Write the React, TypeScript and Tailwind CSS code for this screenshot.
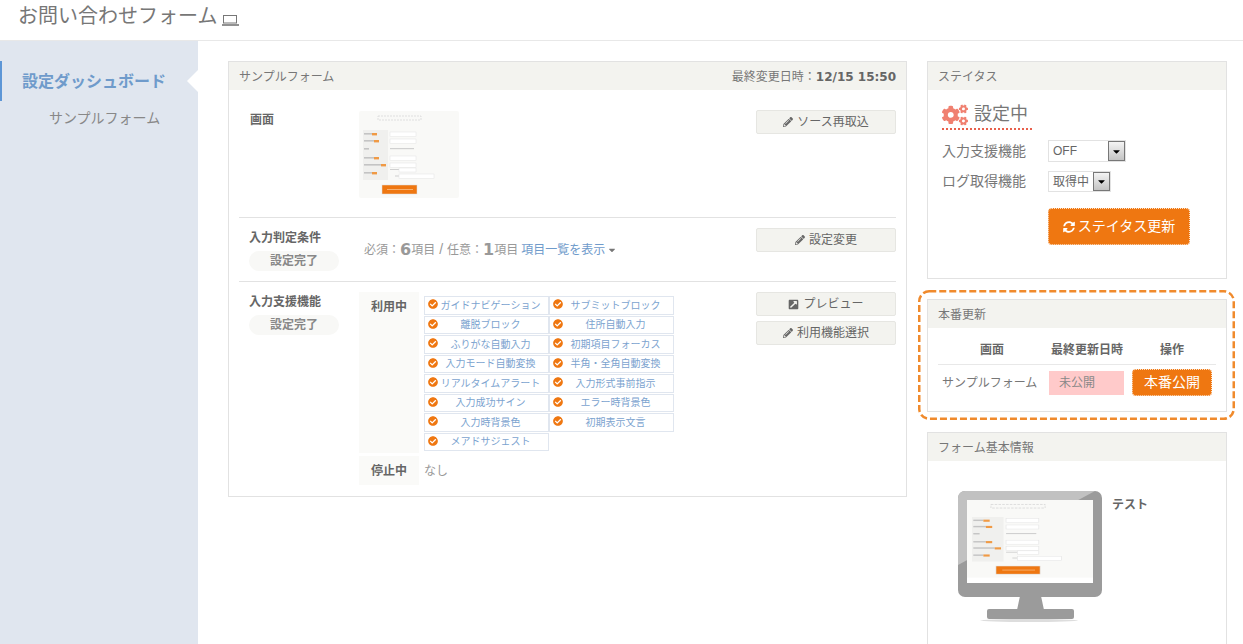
import { FaCaretDown, FaCheckCircle, FaCogs, FaExternalLinkSquareAlt, FaPencilAlt, FaSyncAlt } from "react-icons/fa"

const features = [
  "ガイドナビゲーション", "サブミットブロック",
  "離脱ブロック", "住所自動入力",
  "ふりがな自動入力", "初期項目フォーカス",
  "入力モード自動変換", "半角・全角自動変換",
  "リアルタイムアラート", "入力形式事前指示",
  "入力成功サイン", "エラー時背景色",
  "入力時背景色", "初期表示文言",
  "メアドサジェスト",
]

function FormThumbShapes() {
  return (
    <>
      <rect width="100" height="87" fill="#f9f9f7" />
      <rect x="19" y="5" width="43" height="4" fill="none" stroke="#d4d4d4" strokeWidth="0.7" strokeDasharray="2 1" />
      <rect x="4" y="19" width="25" height="50" fill="#f0f0ee" />
      {[21, 28, 45, 52].map((y, i) => (
        <g key={y}>
          <rect x="5" y={y + 1} width={[8, 10, 10, 17][i]} height="1.6" fill="#c4c4c4" />
          <rect x={[13, 15, 15, 22][i]} y={y + 1} width="5" height="2.4" fill="#f09a45" />
          <rect x="31" y={y} width="26" height="4.5" fill="#fff" stroke="#e3e3e3" strokeWidth="0.5" />
        </g>
      ))}
      <rect x="5" y="37" width="5" height="1.6" fill="#c4c4c4" />
      <rect x="31" y="37" width="24" height="1.2" fill="#d0d0d0" />
      <rect x="5" y="61" width="8" height="1.6" fill="#c4c4c4" />
      <rect x="13" y="61" width="5" height="2.4" fill="#f09a45" />
      <rect x="31" y="58" width="9" height="1" fill="#d0d0d0" />
      <rect x="40" y="57" width="17" height="4" fill="#fff" stroke="#e3e3e3" strokeWidth="0.5" />
      <rect x="36" y="64.5" width="4" height="1" fill="#d0d0d0" />
      <rect x="40" y="63" width="35" height="4.5" fill="#fff" stroke="#e3e3e3" strokeWidth="0.5" />
      <rect x="23" y="74" width="35" height="9" fill="#ef7711" stroke="#ddd" strokeWidth="0.5" />
      <rect x="28" y="78" width="26" height="1" fill="#f7b070" />
    </>
  )
}

function Monitor() {
  return (
    <svg width="144" height="131" viewBox="0 0 144 131">
      <ellipse cx="71" cy="129.5" rx="49" ry="1.5" fill="#ddd" />
      <path d="M62 105H83L86 119H59Z" fill="#9b9b9b" />
      <rect x="29" y="118" width="87" height="10" rx="2" fill="#9b9b9b" />
      <rect width="144" height="106" rx="7" fill="#9b9b9b" />
      <path d="M0 74V7A7 7 0 0 1 7 0H137Z" fill="#c1c1c1" />
      <rect x="9" y="9" width="126" height="83" fill="#fff" />
      <svg x="9" y="9" width="126" height="83" viewBox="0 0 100 93" preserveAspectRatio="none">
        <FormThumbShapes />
      </svg>
    </svg>
  )
}

function Panel({ title, right, className, children }: { title: string; right?: React.ReactNode; className?: string; children: React.ReactNode }) {
  return (
    <section className={`border border-[#e2e2e2] bg-white ${className ?? ""}`}>
      <div className="flex h-[28px] items-center justify-between bg-[#f3f3ef] px-[10px] pt-[2px] text-[12px] text-[#777]">
        <span>{title}</span>
        {right}
      </div>
      {children}
    </section>
  )
}

function GrayButton({ icon, label }: { icon: React.ReactNode; label: string }) {
  return (
    <button className="flex h-[24px] w-[140px] items-center justify-center gap-[4px] rounded-[2px] border border-[#e6e6e2] bg-[#f3f3ef] text-[12px] text-[#666]">
      {icon}
      {label}
    </button>
  )
}

function Pill() {
  return (
    <div className="mt-[4px] flex h-[20px] w-[90px] items-center justify-center rounded-full bg-[#f8f8f6] text-[12px] font-bold text-[#888]">
      設定完了
    </div>
  )
}

function FakeSelect({ value, width }: { value: string; width: string }) {
  return (
    <div className={`flex items-stretch border border-[#e2e2e2] bg-white text-[12px] text-[#666] ${width}`}>
      <span className="flex flex-1 items-center pl-[4px]">{value}</span>
      <span className="flex w-[17px] items-center justify-center border border-[#777] bg-gradient-to-b from-[#f4f4f4] to-[#c4c4c4] text-black">
        <FaCaretDown size={11} />
      </span>
    </div>
  )
}

function OrangeButton({ className, children }: { className?: string; children: React.ReactNode }) {
  return (
    <button className={`flex items-center justify-center rounded-[4px] border border-dotted border-[#fde3cc] bg-[#ef7711] text-[14px] text-white ${className ?? ""}`}>
      {children}
    </button>
  )
}

export default function App() {
  return (
    <div className="h-[644px] overflow-hidden bg-white font-['Liberation_Sans','Noto_Sans_CJK_JP',sans-serif] text-[#777]">
      <header className="flex h-[41px] items-start border-b border-[#e8e8e8] pl-[18px] pt-[2px]">
        <h1 className="text-[20px] leading-[28px] text-[#777]">お問い合わせフォーム</h1>
        <svg className="ml-[5px] mt-[12px]" width="17" height="12" viewBox="0 0 17 12" fill="none" stroke="#777">
          <rect x="1.5" y="1.5" width="13" height="7.5" strokeWidth="1" />
          <path d="M0 11H17" strokeWidth="1.6" />
        </svg>
      </header>

      <div className="flex h-[603px]">
        <aside className="relative w-[198px] shrink-0 bg-[#e0e6ef] pt-[20px]">
          <div className="flex h-[40px] items-center border-l-2 border-[#5d96d6] pl-[20px] pt-[2px] text-[16px] font-bold text-[#6f9bcb]">
            設定ダッシュボード
          </div>
          <div className="absolute left-[187px] top-[29px] h-0 w-0 border-y-[11px] border-r-[11px] border-y-transparent border-r-white" />
          <div className="pl-[49px] pt-[7px] text-[14px] leading-[20px] text-[#888]">サンプルフォーム</div>
        </aside>

        <main className="flex flex-1 items-start pl-[30px] pt-[20px]">
          <Panel
            title="サンプルフォーム"
            className="h-[436px] w-[679px] shrink-0"
            right={
              <span>
                最終変更日時：<b className="font-['DejaVu_Sans',sans-serif] text-[#666]">12/15 15:50</b>
              </span>
            }
          >
            <div className="mx-[10px]">
              <div className="flex h-[128px] border-b border-[#e2e2e2] pt-[20px]">
                <div className="mt-[1px] w-[120px] pl-[11px] text-[12px] font-bold leading-[18px] text-[#666]">画面</div>
                <svg width="100" height="87" viewBox="0 0 100 87" className="mt-[1px] rounded-[2px]">
                  <FormThumbShapes />
                </svg>
                <div className="ml-auto">
                  <GrayButton icon={<FaPencilAlt size={10} />} label="ソース再取込" />
                </div>
              </div>

              <div className="flex h-[64px] border-b border-[#e2e2e2] pt-[10px]">
                <div className="w-[120px] pl-[10px]">
                  <div className="mt-[1px] text-[12px] font-bold leading-[18px] text-[#666]">入力判定条件</div>
                  <Pill />
                </div>
                <div className="flex h-[24px] translate-x-[5px] items-center self-start pt-[19px] text-[12px] text-[#999]">
                  必須：<b className="font-['DejaVu_Sans',sans-serif] text-[16px] text-[#999]">6</b>項目
                  <span className="mx-[4px] text-[14px]">/</span>
                  任意：<b className="font-['DejaVu_Sans',sans-serif] text-[16px] text-[#999]">1</b>項目
                  <span className="ml-[3px] flex items-center text-[#6f9bcb]">
                    項目一覧を表示
                    <FaCaretDown size={10} className="ml-[2px] text-[#777]" />
                  </span>
                </div>
                <div className="ml-auto">
                  <GrayButton icon={<FaPencilAlt size={10} />} label="設定変更" />
                </div>
              </div>

              <div className="flex pt-[10px]">
                <div className="w-[120px] pl-[10px]">
                  <div className="mt-[1px] text-[12px] font-bold leading-[18px] text-[#666]">入力支援機能</div>
                  <Pill />
                </div>
                <div className="w-[315px]">
                  <div className="flex h-[161px]">
                    <div className="w-[60px] bg-[#fafaf8] pt-[6px] text-center text-[12px] font-bold leading-[18px] text-[#666]">利用中</div>
                    <div className="flex-1 pl-[5px] pt-[4px]">
                      <ul className="grid w-[250px] auto-rows-[19.5px] grid-cols-2 text-[10px] text-[#7ba3cf]">
                        {features.map((f) => (
                          <li key={f} className="relative flex h-[18.5px] items-center justify-center whitespace-nowrap border border-[#e0e6ef] pl-[10px] pr-[2px]">
                            <FaCheckCircle size={10} className="absolute left-[3px] top-[2px] text-[#ef7711]" />
                            {f}
                          </li>
                        ))}
                      </ul>
                    </div>
                  </div>
                  <div className="mt-[3px] flex h-[29px] items-center">
                    <div className="flex h-full w-[60px] items-center justify-center bg-[#fafaf8] text-[12px] font-bold text-[#666]">停止中</div>
                    <span className="pl-[5px] text-[12px] text-[#999]">なし</span>
                  </div>
                </div>
                <div className="ml-auto flex flex-col gap-[5px]">
                  <GrayButton icon={<FaExternalLinkSquareAlt size={11} />} label="プレビュー" />
                  <GrayButton icon={<FaPencilAlt size={10} />} label="利用機能選択" />
                </div>
              </div>
            </div>
          </Panel>

          <div className="ml-[20px] w-[300px] shrink-0">
            <Panel title="ステイタス" className="h-[218px]">
              <div className="px-[14px] pt-[11px]">
                <div className="flex h-[29px] w-[90px] items-center gap-[6px] border-b-2 border-dotted border-[#e8604c] text-[18px] text-[#777]">
                  <FaCogs size={26} className="text-[#f08070]" />
                  <span>設定中</span>
                </div>
                <div className="mt-[10px] flex items-center">
                  <span className="w-[106px] text-[14px]">入力支援機能</span>
                  <FakeSelect value="OFF" width="h-[22px] w-[78px]" />
                </div>
                <div className="mt-[9px] flex items-center">
                  <span className="w-[106px] text-[14px]">ログ取得機能</span>
                  <FakeSelect value="取得中" width="h-[21px] w-[63px]" />
                </div>
                <OrangeButton className="ml-[106px] mt-[16px] h-[37px] w-[142px] gap-[3px]">
                  <FaSyncAlt size={12} />
                  ステイタス更新
                </OrangeButton>
              </div>
            </Panel>

            <div className="relative -ml-[9px] -mr-[8px] mt-[11px] pb-[8px] pl-[9px] pr-[8px] pt-[9px]">
              <svg className="absolute left-0 top-0" width="317" height="130" viewBox="0 0 317 130" fill="none">
                <rect x="1.25" y="1.25" width="314.5" height="127.5" rx="10" stroke="#f08a2c" strokeWidth="2.5" strokeDasharray="7 3" />
              </svg>
              <Panel title="本番更新" className="h-[113px]">
                <div className="mx-[10px]">
                  <div className="flex h-[37px] items-center border-b border-[#e8e8e8] pt-[8px] text-center text-[12px] font-bold text-[#666]">
                    <span className="w-[108px]">画面</span>
                    <span className="w-[82px]">最終更新日時</span>
                    <span className="w-[88px]">操作</span>
                  </div>
                  <div className="flex items-center pt-[4px] text-[12px]">
                    <span className="w-[111px] pl-[4px]">サンプルフォーム</span>
                    <span className="flex h-[24px] w-[75px] items-center bg-[#ffcaca] pl-[10px] text-[#888]">未公開</span>
                    <OrangeButton className="ml-[8px] h-[27px] w-[80px]">本番公開</OrangeButton>
                  </div>
                </div>
              </Panel>
            </div>

            <Panel title="フォーム基本情報" className="mt-[12px] h-[260px]">
              <div className="flex pl-[30px] pt-[30px]">
                <Monitor />
                <span className="ml-[10px] pt-[5px] text-[12px] font-bold leading-[18px] text-[#666]">テスト</span>
              </div>
            </Panel>
          </div>
        </main>
      </div>
    </div>
  )
}
